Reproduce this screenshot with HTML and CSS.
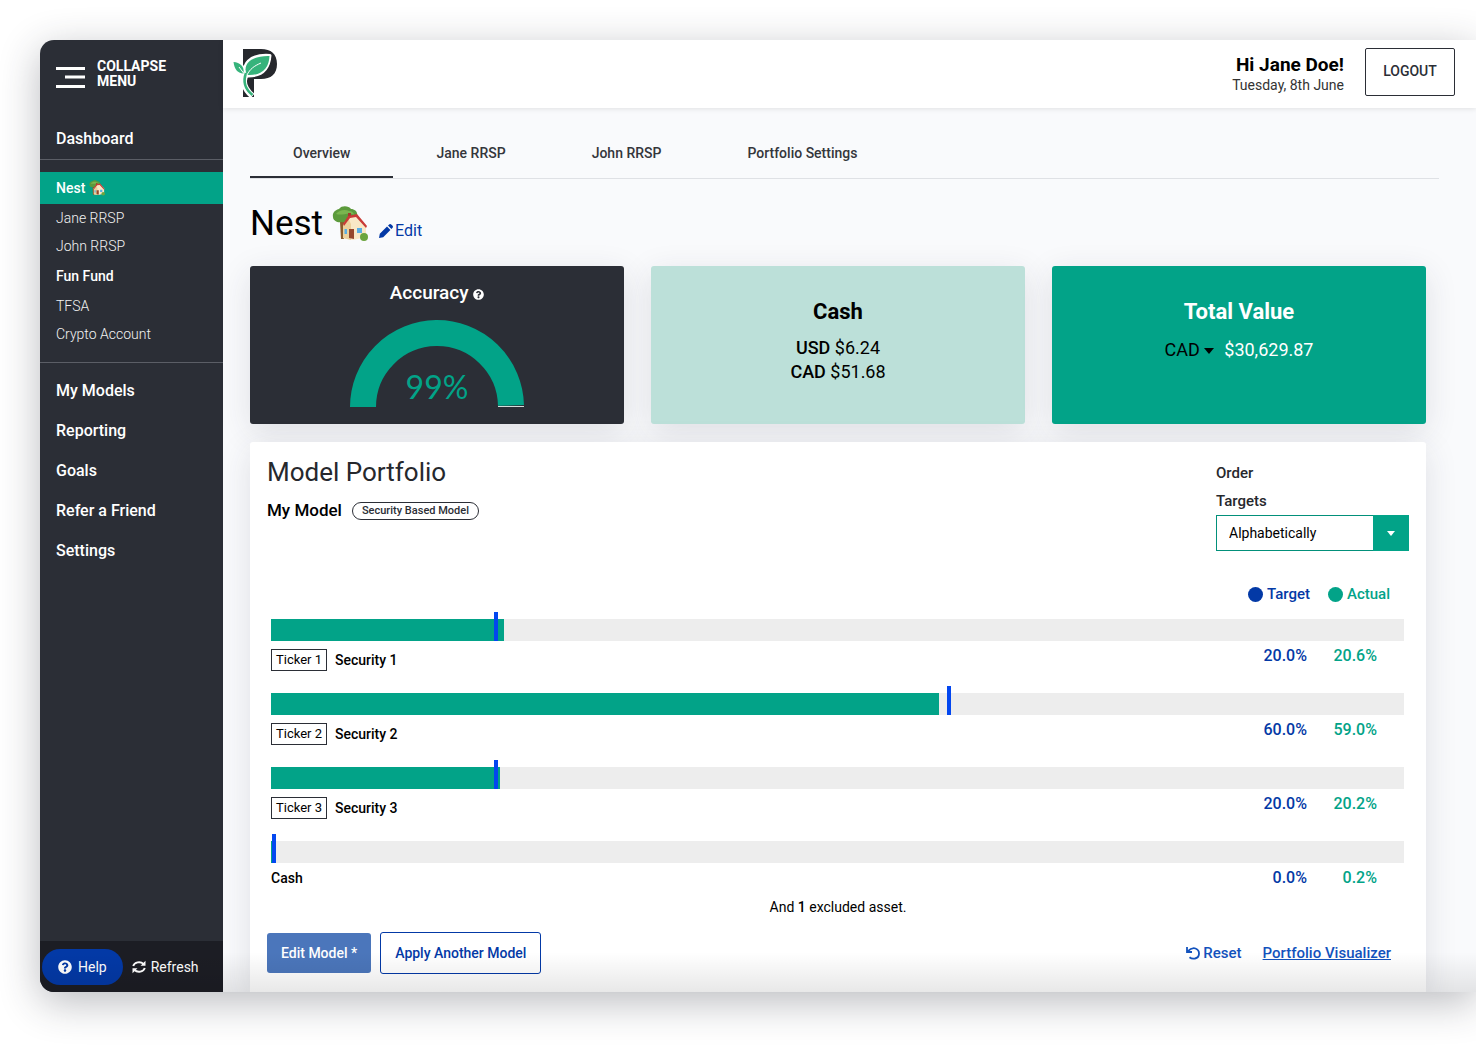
FILE: index.html
```html
<!DOCTYPE html>
<html lang="en">
<head>
<meta charset="utf-8">
<meta name="viewport" content="width=device-width, initial-scale=1">
<title>Nest – Portfolio overview</title>
<link rel="stylesheet" href="styles.css">
</head>
<body>
<svg class="sprite" width="0" height="0" aria-hidden="true">
  <symbol id="house" viewBox="0 0 36 36">
    <path d="M8 16h4v17H9z" fill="#8a5a2b"/>
    <path d="M1 11C0 6 4 4 7 3c3-4 10-3 12 0 4 0 7 3 6 7 0 4-4 5-7 5-3 2-6 1-8 1-4 1-9-1-9-5z" fill="#5c9a3c"/>
    <path d="M4 8c3-4 9-5 13-3 3 0 5 2 5 4-5-3-12 1-18-1z" fill="#7ab54f"/>
    <path d="M11 19 17 11 25 9l9 10v12l-13 3-10-2z" fill="#f9e8c6"/>
    <path d="M11 19 16 12l3 6v16l-8-2z" fill="#ecd09c"/>
    <path d="M16 7h3v4l-3 2z" fill="#a33a2c"/>
    <path d="M11 18 16 10l9-2 10 12-1 2-10-11-6 1-6 8z" fill="#c93a36"/>
    <path d="M17 23h5v10l-5-1z" fill="#96472c"/>
    <path d="M12.500 23h2.500v5h-2.500zM25 22h5v5h-5z" fill="#5aaee2"/>
    <circle cx="32" cy="31" r="4" fill="#6ba53e"/>
  </symbol>
  <symbol id="question" viewBox="0 0 512 512">
    <path fill="currentColor" d="M504 256c0 137-111 248-248 248S8 393 8 256C8 119 119 8 256 8s248 111 248 248zM262.700 90c-54.500 0-89.300 23-116.500 63.800-3.500 5.300-2.400 12.400 2.700 16.300l34.700 26.300c5.200 3.900 12.600 3 16.700-2.100 17.900-22.700 30.100-35.800 57.300-35.800 20.400 0 45.700 13.100 45.700 33 0 15-12.400 22.700-32.500 34C247.100 238.500 216 254.900 216 296v4c0 6.600 5.400 12 12 12h56c6.600 0 12-5.400 12-12v-1.300c0-28.500 83.200-29.600 83.200-106.700 0-58-60.200-102-116.500-102zM256 338c-25.400 0-46 20.600-46 46s20.600 46 46 46 46-20.600 46-46-20.600-46-46-46z"/>
  </symbol>
</svg>

<div class="app">
  <aside class="sidebar">
    <button class="collapse" type="button">
      <svg width="30" height="22" viewBox="0 0 30 22" aria-hidden="true"><path d="M0 1.500h29M9 10h20M0 19.500h29" stroke="#fff" stroke-width="3" fill="none"/></svg>
      <span>COLLAPSE<br>MENU</span>
    </button>
    <nav class="nav">
      <a class="nav-main nav-dashboard" href="#">Dashboard</a>
      <div class="nav-groups">
        <a class="nav-group active" href="#">Nest <svg class="emoji-small" role="img" aria-label="house with garden"><use href="#house"/></svg></a>
        <a class="nav-account" href="#">Jane RRSP</a>
        <a class="nav-account" href="#">John RRSP</a>
        <a class="nav-group" href="#">Fun Fund</a>
        <a class="nav-account" href="#">TFSA</a>
        <a class="nav-account" href="#">Crypto Account</a>
      </div>
      <div class="nav-list">
        <a class="nav-main" href="#">My Models</a>
        <a class="nav-main" href="#">Reporting</a>
        <a class="nav-main" href="#">Goals</a>
        <a class="nav-main" href="#">Refer a Friend</a>
        <a class="nav-main" href="#">Settings</a>
      </div>
    </nav>
    <div class="sidebar-foot">
      <button class="help" type="button"><svg width="14" height="14" aria-hidden="true"><use href="#question"/></svg>Help</button>
      <button class="refresh" type="button">
        <svg width="14" height="14" viewBox="0 0 14 14" fill="none" stroke="currentColor" stroke-width="1.900" aria-hidden="true"><path d="M1.200 6A6 5 0 0 1 11.500 4M12.800 8A6 5 0 0 1 2.500 10"/><path d="M13.500.8v5H8.500zM.5 13.200v-5h5z" fill="currentColor" stroke="none"/></svg>Refresh</button>
    </div>
  </aside>

  <div class="page">
    <header class="topbar">
      <a class="logo" href="#" aria-label="Home">
        <svg width="45" height="50" viewBox="0 0 45 50" aria-hidden="true">
          <path d="M10 1h18c10 0 16 5 16 15S38 31 28 31h-7v18H10z" fill="#26282d"/>
          <g stroke="#fff" stroke-width="3" stroke-linejoin="round">
            <path d="M14 28C8 17 16 6 37 7.500 36 21 29 28.500 14 28z" fill="#fff"/>
            <path d="M10.500 26C4 25 1 21 .5 13.500 7 14 12 18 10.500 26z" fill="#fff"/>
            <path d="M19.500 48C11 41 9 33 13 26" fill="none" stroke-width="6"/>
          </g>
          <path d="M14 27C9 17 17 7.500 36.500 8 36 20 29 28 14 27z" fill="#36b37b"/>
          <path d="M10.500 25.500C4 25 1.500 21 .5 14 7 14.500 11.500 18 10.500 25.500z" fill="#36b37b"/>
          <path d="M19.500 47C12 41 10 33 13 25" fill="none" stroke="#36b37b" stroke-width="2.600"/>
          <path d="M14 27c3-6 7-9 14-12M10.500 25 6 19" fill="none" stroke="#fff"/>
        </svg>
      </a>
      <div class="greeting"><strong>Hi Jane Doe!</strong><span>Tuesday, 8th June</span></div>
      <button class="logout" type="button">LOGOUT</button>
    </header>

    <main class="content">
      <nav class="tabs">
        <a class="tab current" href="#">Overview</a>
        <a class="tab" href="#">Jane RRSP</a>
        <a class="tab" href="#">John RRSP</a>
        <a class="tab" href="#">Portfolio Settings</a>
      </nav>

      <div class="panels">
        <div class="title">
          <h1>Nest</h1>
          <svg class="emoji-large" role="img" aria-label="house with garden"><use href="#house"/></svg>
          <a class="edit" href="#"><svg width="14" height="14" viewBox="0 0 14 14" fill="currentColor" aria-hidden="true"><path d="M0 14 .8 9.800 8 2.600 11.400 6 4.200 13.200zM9 1.600l1.200-1.200c.6-.6 1.400-.5 2 0l1.400 1.400c.5.600.5 1.400 0 2L12.400 5z"/></svg>Edit</a>
        </div>

        <section class="stats">
          <div class="stat accuracy">
            <h2>Accuracy <svg width="11" height="11" aria-hidden="true"><use href="#question"/></svg></h2>
            <div class="gauge">
              <svg width="174" height="87" viewBox="0 0 174 87" aria-hidden="true">
                <path d="M148 86h26v1h-26z" fill="#d5dcda"/>
                <path d="M13 87a74 74 0 0 1 147.980-1.600" fill="none" stroke="#02a388" stroke-width="26"/>
              </svg>
              <span class="gauge-value">99%</span>
            </div>
          </div>
          <div class="stat cash">
            <h2>Cash</h2>
            <p><b>USD</b> $6.24</p>
            <p><b>CAD</b> $51.68</p>
          </div>
          <div class="stat total">
            <h2>Total Value</h2>
            <div class="total-row">
              <button class="currency" type="button">CAD <svg width="10" height="6" viewBox="0 0 10 6" aria-hidden="true"><path d="M0 0h10L5 6z"/></svg></button>
              <span>$30,629.87</span>
            </div>
          </div>
        </section>

        <section class="portfolio">
          <div class="portfolio-head">
            <div>
              <h2>Model Portfolio</h2>
              <div class="model"><h3>My Model</h3><span class="badge">Security Based Model</span></div>
            </div>
            <div class="order">
              <label for="order">Order<br>Targets</label>
              <div class="select">
                <select id="order"><option>Alphabetically</option><option>By target</option></select>
                <span class="select-arrow"><svg width="8" height="5" viewBox="0 0 8 5" aria-hidden="true"><path d="M0 0h8L4 5z" fill="#fff"/></svg></span>
              </div>
            </div>
          </div>

          <div class="chart">
            <div class="legend"><span class="target">Target</span><span class="actual">Actual</span></div>
            <div class="row">
              <div class="bar"><div class="fill" style="width:20.6%"></div><div class="tick" style="left:20%"></div></div>
              <div class="row-info"><span class="ticker">Ticker 1</span><b>Security 1</b><span class="pct target">20.0%</span><span class="pct actual">20.6%</span></div>
            </div>
            <div class="row">
              <div class="bar"><div class="fill" style="width:59%"></div><div class="tick" style="left:60%"></div></div>
              <div class="row-info"><span class="ticker">Ticker 2</span><b>Security 2</b><span class="pct target">60.0%</span><span class="pct actual">59.0%</span></div>
            </div>
            <div class="row">
              <div class="bar"><div class="fill" style="width:20.2%"></div><div class="tick" style="left:20%"></div></div>
              <div class="row-info"><span class="ticker">Ticker 3</span><b>Security 3</b><span class="pct target">20.0%</span><span class="pct actual">20.2%</span></div>
            </div>
            <div class="row">
              <div class="bar"><div class="fill" style="width:0.2%"></div><div class="tick tick-start" style="left:0%"></div></div>
              <div class="row-info"><b>Cash</b><span class="pct target">0.0%</span><span class="pct actual">0.2%</span></div>
            </div>
          </div>
          <p class="excluded">And <b>1</b> excluded asset.</p>

          <div class="actions">
            <button class="btn btn-primary" type="button">Edit Model *</button>
            <button class="btn btn-outline" type="button">Apply Another Model</button>
            <button class="reset" type="button"><svg width="14" height="13" viewBox="0 0 14 13" fill="none" stroke="currentColor" stroke-width="1.800" aria-hidden="true"><path d="M1 0v5h5M1.500 4.500C5 1 8 1 9.500 1.500c5 2 4.500 9-.5 10-2 .5-4 0-5.500-1.200"/></svg>Reset</button>
            <a class="visualizer" href="#">Portfolio Visualizer</a>
          </div>
        </section>
      </div>
    </main>
  </div>
</div>
</body>
</html>
```
FILE: styles.css
```css
* { box-sizing: border-box; }

body {
  margin: 0;
  padding: 40px 0 56px 40px;
  background: #fff;
  color: #000;
  font: 400 14px/20px Roboto, "Liberation Sans", sans-serif;
  overflow-x: hidden;
}

h1, h2, h3, p { margin: 0; font-weight: 400; }
b { font-weight: 500; }
a { color: inherit; text-decoration: none; }
button, select { font: inherit; color: inherit; margin: 0; padding: 0; border: 0; background: none; cursor: pointer; }
.sprite { position: absolute; }

.app {
  position: relative;
  display: flex;
  min-height: calc(100vh - 96px);
  border-radius: 14px 0 0 14px;
  overflow: hidden;
  background: #f9fafc;
  box-shadow: 0 10px 40px rgba(40, 44, 55, 0.32);
}

/* Soft shade along the bottom edge of the window */
.app::after {
  content: "";
  position: absolute;
  inset: auto 0 0 0;
  height: 40px;
  background: linear-gradient(rgba(0, 0, 0, 0), rgba(0, 0, 0, 0.09));
  pointer-events: none;
}

/* Sidebar */
.sidebar {
  flex: 0 0 183px;
  display: flex;
  flex-direction: column;
  background: #2b2e36;
  color: #fff;
}
.collapse {
  display: flex;
  align-items: flex-end;
  gap: 11px;
  padding: 19px 16px 0;
  text-align: left;
  font-weight: 700;
  line-height: 15px;
}
.nav { flex: 1; }
.nav a { display: block; padding: 0 16px; }
.nav .nav-main { font-size: 16px; font-weight: 500; line-height: 40px; }
.nav .nav-dashboard { margin-top: 30px; border-bottom: 1px solid #5b5e66; }
.nav-groups { padding: 12px 0 14px; border-bottom: 1px solid #5b5e66; }
.nav-group { font-weight: 500; line-height: 32px; }
.nav-account { font-weight: 300; line-height: 28px; color: #f2f2f2; }
.nav-group.active { background: #02a388; }
.nav-list { padding-top: 8px; }
.emoji-small { width: 16px; height: 16px; vertical-align: -3px; }
.sidebar-foot {
  display: flex;
  align-items: center;
  gap: 9px;
  padding: 8px 2px 7px;
  background: #1c1d24;
}
.help, .refresh { display: flex; align-items: center; gap: 6px; line-height: 36px; }
.help { padding: 0 16px; border-radius: 18px; background: #0339a6; }
.refresh { gap: 5px; }

/* Top bar */
.page { flex: 1; min-width: 0; display: flex; flex-direction: column; }
.topbar {
  display: flex;
  align-items: flex-start;
  height: 68px;
  padding: 8px 21px 0 10px;
  background: #fff;
  box-shadow: 0 1px 5px rgba(0, 0, 0, 0.1);
}
.logo { display: flex; }
.greeting {
  display: flex;
  flex-direction: column;
  margin-left: auto;
  padding-top: 7px;
  text-align: right;
  color: #333;
}
.greeting strong { font-size: 19px; font-weight: 700; color: #000; }
.logout {
  width: 90px;
  height: 48px;
  margin-left: 21px;
  padding-bottom: 2px;
  border: 1px solid #2b2e36;
  border-radius: 2px;
  font-weight: 500;
  color: #2b2e36;
}

/* Content */
.content { flex: 1; display: flex; flex-direction: column; padding: 20px 37px 0 27px; }
.tabs { display: flex; border-bottom: 1px solid #dfe1e5; }
.tab { padding: 0 43px; font-weight: 500; line-height: 50px; color: #34363b; }
.tab.current { box-shadow: inset 0 -2px #2b2e36; }
.panels { flex: 1; display: flex; flex-direction: column; padding-right: 13px; }

.title { display: flex; align-items: center; height: 87px; }
.title h1 { padding-top: 3px; font-size: 35px; line-height: 40px; }
.emoji-large { width: 36px; height: 36px; margin: 3px 0 0 9px; }
.edit {
  display: flex;
  align-items: center;
  gap: 2px;
  margin: 16px 0 0 11px;
  font-size: 16px;
  color: #0339a6;
}

.stats { display: grid; grid-template-columns: repeat(3, 1fr); gap: 27px; }
.stat {
  min-height: 158px;
  border-radius: 3px;
  text-align: center;
  font-size: 18px;
  line-height: 24px;
  box-shadow: 0 8px 32px rgba(43, 46, 70, 0.13);
}
.stat h2 { font-size: 22px; font-weight: 700; }
.accuracy { padding-top: 15px; background: #2b2e36; color: #fff; }
.stat.accuracy h2 { font-size: 19px; font-weight: 500; }
.accuracy h2 svg { vertical-align: -1px; }
.gauge { position: relative; width: 174px; margin: 15px auto 0; }
.gauge svg { display: block; }
.gauge-value {
  position: absolute;
  inset: auto 0 4px 0;
  font: 400 32px/32px Lato, sans-serif;
  color: #02a388;
}
.cash { padding-top: 34px; background: #bce0d9; }
.cash h2, .total h2 { margin-bottom: 12px; }
.total { padding-top: 34px; background: #02a388; color: #fff; }
.total-row { display: flex; justify-content: center; gap: 10px; line-height: 28px; }
.total .currency { color: #000; }
.currency svg { vertical-align: 2px; }

/* Model portfolio */
.portfolio {
  flex: 1;
  margin-top: 18px;
  padding: 14px 17px 17px;
  border-radius: 3px 3px 0 0;
  background: #fff;
  box-shadow: 0 8px 32px rgba(43, 46, 70, 0.13);
}
.portfolio-head { display: flex; justify-content: space-between; }
.portfolio-head h2 { font-size: 26px; line-height: 32px; color: #26282d; }
.model { display: flex; align-items: center; gap: 10px; margin-top: 12px; }
.model h3 { font-size: 17px; font-weight: 500; }
.badge {
  margin-top: 2px;
  padding: 0 9px;
  border: 1px solid #2b2e36;
  border-radius: 9px;
  font-size: 11px;
  font-weight: 500;
  line-height: 16px;
  color: #2b2e36;
}
.order { width: 193px; padding-top: 3px; }
.order label { display: block; font-size: 15px; font-weight: 500; line-height: 28px; color: #26282d; }
.select { position: relative; }
.select select {
  display: block;
  width: 100%;
  height: 36px;
  padding: 0 48px 0 12px;
  border: 1px solid #02907a;
  appearance: none;
  background: #fff;
}
.select-arrow {
  position: absolute;
  inset: 0 0 0 auto;
  width: 36px;
  display: grid;
  place-items: center;
  background: #02a388;
  pointer-events: none;
}

.chart { padding: 32px 5px 0 4px; }
.target { color: #0339a6; }
.actual { color: #02a388; }
.legend {
  display: flex;
  justify-content: flex-end;
  gap: 18px;
  padding-right: 14px;
  margin-bottom: 14px;
  font-size: 15px;
  font-weight: 500;
  line-height: 22px;
}
.legend span { display: flex; align-items: center; gap: 4px; }
.legend span::before {
  content: "";
  width: 15px;
  height: 15px;
  border-radius: 50%;
  background: currentColor;
}
.row { height: 74px; }
.bar { position: relative; height: 22px; background: #ededed; }
.fill { height: 100%; background: #02a388; }
.tick { position: absolute; top: -7px; bottom: 0; width: 4px; margin-left: -4px; background: #0347f0; }
.tick-start { margin-left: 1px; }
.row-info { display: flex; align-items: center; padding: 8px 27px 0 0; line-height: 20px; }
.ticker { margin-right: 8px; padding: 0 4px; border: 1px solid #2b2e36; font-size: 13px; }
.row-info b { flex: 1; }
.pct { width: 70px; margin-top: -9px; text-align: right; font-size: 16px; font-weight: 500; }
.row:last-child { height: 56px; }
.row:last-child .row-info { padding-top: 5px; }
.row:last-child .pct { margin-top: 0; }
.excluded { text-align: center; }

.actions { display: flex; align-items: center; margin-top: 15px; padding-right: 18px; }
.btn { height: 42px; padding: 0 14px; border-radius: 3px; font-weight: 500; }
.btn-primary { height: 40px; margin-right: 9px; background: #4b76bb; color: #fff; }
.btn-outline { border: 1px solid #0339a6; color: #0339a6; }
.reset { display: flex; align-items: center; gap: 3px; margin: 0 21px 0 auto; }
.reset, .visualizer { font-size: 15px; font-weight: 500; color: #1252bd; }
.visualizer { text-decoration: underline; }
```
